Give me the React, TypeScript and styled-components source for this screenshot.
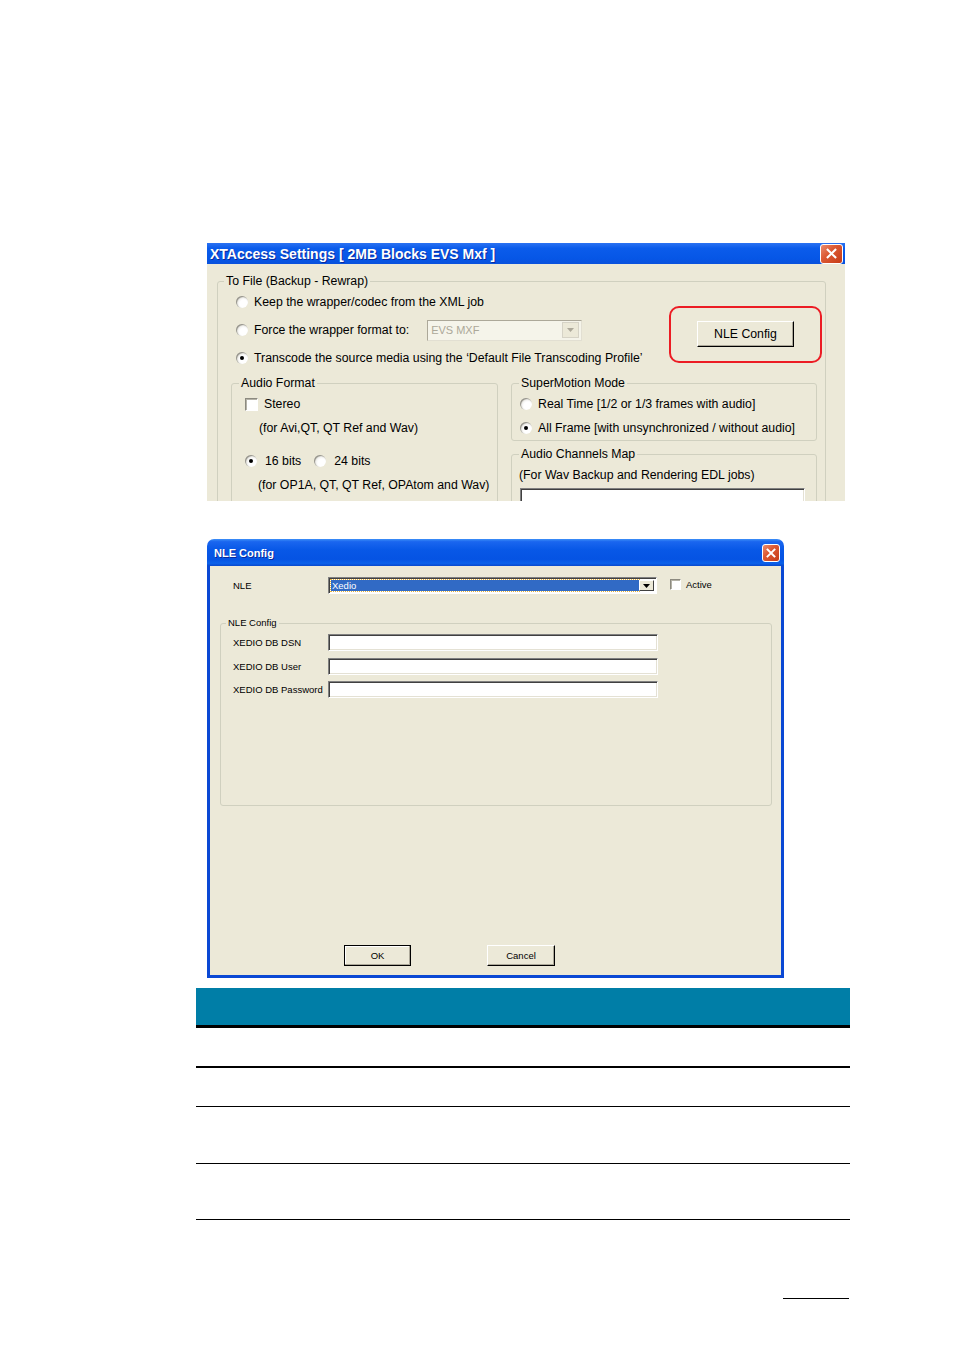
import React from 'react'
import styled, { createGlobalStyle } from 'styled-components'

const GlobalStyle = createGlobalStyle`
  body {
    margin: 0;
    background: #ffffff;
    font-family: "Liberation Sans", Arial, sans-serif;
  }
  * {
    box-sizing: border-box;
  }
`

const Page = styled.div`
  width: 955px;
  height: 1350px;
  padding-top: 243px;
  display: flex;
  flex-direction: column;
  overflow: hidden;
`

/* ---------- shared win xp bits ---------- */

const CloseButton = styled.div<{ $w: number; $h: number }>`
  width: ${p => p.$w}px;
  height: ${p => p.$h}px;
  flex: none;
  border: 1px solid #ffffff;
  border-radius: 3px;
  background: linear-gradient(135deg, #eb8d70 0%, #dc5a34 40%, #c63b16 100%);
  display: flex;
  align-items: center;
  justify-content: center;
`

const GroupBox = styled.fieldset<{ $width?: number; $height: number }>`
  margin: 0;
  padding: 0;
  min-width: 0;
  width: ${p => (p.$width ? `${p.$width}px` : 'auto')};
  height: ${p => p.$height}px;
  flex: none;
  border: 1px solid #d0d0bf;
  border-radius: 3px;
  display: flex;
  flex-direction: column;
`

const Legend = styled.legend<{ $size: number; $offset: number }>`
  margin-left: ${p => p.$offset}px;
  padding: 0 2px;
  font-size: ${p => p.$size}px;
  line-height: 14px;
  color: #000;
`

const RadioCircle = styled.span<{ $checked?: boolean }>`
  width: 12px;
  height: 12px;
  flex: none;
  border-radius: 50%;
  background: radial-gradient(circle at 65% 65%, #ffffff 35%, #d8d6cc 100%);
  box-shadow: inset 1px 1px 1px #8f8d84;
  display: flex;
  align-items: center;
  justify-content: center;
  &::after {
    content: '';
    width: 4px;
    height: 4px;
    border-radius: 50%;
    background: ${p => (p.$checked ? '#000' : 'transparent')};
  }
`

const CheckSquare = styled.span<{ $size: number }>`
  width: ${p => p.$size}px;
  height: ${p => p.$size}px;
  flex: none;
  background: #ffffff;
  border: 1px solid;
  border-color: #8c8a80 #ffffff #ffffff #8c8a80;
  box-shadow: inset 1px 1px 0 #b5b3a8;
`

const WinButton = styled.div<{ $width: number; $height: number; $size: number; $default?: boolean }>`
  width: ${p => p.$width}px;
  height: ${p => p.$height}px;
  flex: none;
  display: flex;
  align-items: center;
  justify-content: center;
  background: #ece9d8;
  font-size: ${p => p.$size}px;
  color: #000;
  border: 1px solid ${p => (p.$default ? '#000' : '#ffffff')};
  border-right-color: #000;
  border-bottom-color: #000;
  box-shadow: inset -1px -1px 0 #aca899, inset ${p => (p.$default ? '1px 1px 0 #ffffff' : '0 0 0 transparent')};
`

const InsetField = styled.div<{ $width: number; $height: number }>`
  width: ${p => p.$width}px;
  height: ${p => p.$height}px;
  flex: none;
  background: #ffffff;
  border: 1px solid;
  border-color: #808080 #ffffff #ffffff #808080;
  box-shadow: inset 1px 1px 0 #404040, inset -1px -1px 0 #e4e1d4;
`

const CloseGlyph: React.FC<{ size: number }> = ({ size }) => (
  <svg width={size} height={size} viewBox="0 0 10 10">
    <path d="M1.5 1.5 L8.5 8.5 M8.5 1.5 L1.5 8.5" stroke="#fff" strokeWidth="1.9" strokeLinecap="square" />
  </svg>
)

const ArrowGlyph: React.FC<{ color: string }> = ({ color }) => (
  <svg width="7" height="4" viewBox="0 0 7 4">
    <path d="M0 0h7L3.5 4z" fill={color} />
  </svg>
)

/* ---------- XTAccess settings window ---------- */

const SettingsWindow = styled.div`
  margin-left: 207px;
  width: 638px;
  height: 258px;
  flex: none;
  overflow: hidden;
  background: #ece9d8;
  display: flex;
  flex-direction: column;
`

const SettingsTitleBar = styled.div`
  height: 21px;
  flex: none;
  display: flex;
  align-items: center;
  justify-content: space-between;
  padding: 0 2px 0 3px;
  background: linear-gradient(180deg, #2b72f2 0%, #0b5ceb 25%, #0656e6 75%, #0a52dc 100%);
  color: #ffffff;
  font-size: 14px;
  font-weight: bold;
  text-shadow: 1px 1px 0 #0a2a9e;
  white-space: nowrap;
`

const SettingsBody = styled.div`
  flex: 1;
  padding: 10px 19px 0 10px;
  font-size: 12.3px;
  color: #000;
`

const TopArea = styled.div`
  display: flex;
  align-items: flex-start;
`

const OptionColumn = styled.div`
  flex: 1;
  padding-left: 18px;
  display: flex;
  flex-direction: column;
`

const OptionRow = styled.div<{ $height: number; $indent?: number; $gap?: number }>`
  height: ${p => p.$height}px;
  padding-left: ${p => p.$indent ?? 0}px;
  display: flex;
  align-items: center;
  gap: ${p => p.$gap ?? 6}px;
  white-space: nowrap;
`

const Spacer = styled.div<{ $height: number }>`
  height: ${p => p.$height}px;
`

const DisabledCombo = styled.div`
  width: 155px;
  height: 21px;
  margin-left: 12px;
  display: flex;
  align-items: center;
  justify-content: space-between;
  padding: 0 2px 0 3px;
  background: #f5f4ea;
  border: 1px solid;
  border-color: #aca899 #e2dfd2 #e2dfd2 #aca899;
  color: #aca899;
  font-size: 11px;
`

const DisabledArrowButton = styled.div`
  width: 17px;
  height: 16px;
  display: flex;
  align-items: center;
  justify-content: center;
  background: #ece9d8;
  border: 1px solid #d6d3c6;
`

const HighlightBox = styled.div`
  width: 153px;
  height: 57px;
  margin: 18px 3px 0 0;
  flex: none;
  border: 2px solid #ec1c24;
  border-radius: 10px;
  display: flex;
  align-items: center;
  justify-content: center;
  padding-bottom: 2px;
`

const LowerArea = styled.div`
  margin-top: 4px;
  padding-left: 13px;
  display: flex;
  gap: 13px;
`

const GroupContent = styled.div<{ $indent: number; $top?: number }>`
  padding-left: ${p => p.$indent}px;
  padding-top: ${p => p.$top ?? 0}px;
  display: flex;
  flex-direction: column;
`

const RightColumn = styled.div`
  display: flex;
  flex-direction: column;
  gap: 6px;
`

/* ---------- NLE config window ---------- */

const NleWindow = styled.div`
  margin: 38px 0 0 207px;
  width: 577px;
  height: 439px;
  flex: none;
  display: flex;
  flex-direction: column;
  border-radius: 7px 7px 0 0;
  overflow: hidden;
`

const NleTitleBar = styled.div`
  height: 27px;
  flex: none;
  display: flex;
  align-items: center;
  justify-content: space-between;
  padding: 0 4px 0 7px;
  background: linear-gradient(180deg, #3d8ff8 0%, #1a66ef 10%, #0858e7 40%, #0553e3 75%, #0b61ea 90%, #0848cc 100%);
  color: #ffffff;
  font-size: 11px;
  font-weight: bold;
  text-shadow: 1px 1px 0 #0a2a9e;
`

const NleBody = styled.div`
  flex: 1;
  display: flex;
  flex-direction: column;
  background: #ece9d8;
  border: 3px solid #0a48d4;
  border-top: none;
  font-size: 9.5px;
  color: #000;
`

const FieldRow = styled.div<{ $indent: number }>`
  display: flex;
  align-items: center;
  padding-left: ${p => p.$indent}px;
  white-space: nowrap;
`

const FieldLabel = styled.span`
  width: 95px;
  flex: none;
`

const SelectCombo = styled.div`
  width: 329px;
  height: 17px;
  flex: none;
  display: flex;
  align-items: center;
  padding: 2px;
  background: #ffffff;
  border: 1px solid;
  border-color: #808080 #ffffff #ffffff #808080;
  box-shadow: inset 1px 1px 0 #404040;
`

const SelectedValue = styled.div`
  flex: 1;
  height: 100%;
  display: flex;
  align-items: center;
  padding-left: 1px;
  background: #316ac5;
  outline: 1px dotted #e6b33c;
  color: #ffffff;
`

const ArrowButton = styled.div`
  width: 15px;
  height: 100%;
  flex: none;
  display: flex;
  align-items: center;
  justify-content: center;
  background: #ece9d8;
  border: 1px solid;
  border-color: #ffffff #404040 #404040 #ffffff;
`

const ActiveToggle = styled.div`
  margin-left: 13px;
  display: flex;
  align-items: center;
  gap: 5px;
  margin-top: -3px;
`

const NleGroupWrap = styled.div`
  margin: 22px 9px 0 10px;
`

const FieldList = styled.div`
  margin-top: 4px;
  display: flex;
  flex-direction: column;
  gap: 6.5px;
`

const ButtonRow = styled.div`
  margin-top: auto;
  padding: 0 0 9px 134px;
  display: flex;
  gap: 76px;
`

/* ---------- table + page rule ---------- */

const SpecTable = styled.div`
  margin: 10px 0 0 196px;
  width: 654px;
  flex: none;
`

const SpecHeader = styled.div`
  height: 40px;
  background: #007ea7;
  border-bottom: 3px solid #000;
`

const SpecRow = styled.div<{ $height: number; $rule: number }>`
  height: ${p => p.$height}px;
  border-bottom: ${p => p.$rule}px solid #000;
`

const FooterRule = styled.div`
  margin: 78px 0 0 783px;
  width: 66px;
  height: 1px;
  flex: none;
  background: #000;
`

const specRows = [
  { height: 40, rule: 2 },
  { height: 39, rule: 1 },
  { height: 57, rule: 1 },
  { height: 56, rule: 1 },
]

const App: React.FC = () => {
  return (
    <Page>
      <GlobalStyle />

      <SettingsWindow>
        <SettingsTitleBar>
          <span>XTAccess Settings [ 2MB Blocks EVS Mxf ]</span>
          <CloseButton $w={23} $h={20}>
            <CloseGlyph size={11} />
          </CloseButton>
        </SettingsTitleBar>
        <SettingsBody>
          <GroupBox $height={300}>
            <Legend $size={12.3} $offset={6}>To File (Backup - Rewrap)</Legend>
            <TopArea>
              <OptionColumn>
                <OptionRow $height={28}>
                  <RadioCircle />
                  <span>Keep the wrapper/codec from the XML job</span>
                </OptionRow>
                <OptionRow $height={28}>
                  <RadioCircle />
                  <span>Force the wrapper format to:</span>
                  <DisabledCombo>
                    <span>EVS MXF</span>
                    <DisabledArrowButton>
                      <ArrowGlyph color="#aca899" />
                    </DisabledArrowButton>
                  </DisabledCombo>
                </OptionRow>
                <OptionRow $height={28}>
                  <RadioCircle $checked />
                  <span>Transcode the source media using the ‘Default File Transcoding Profile’</span>
                </OptionRow>
              </OptionColumn>
              <HighlightBox>
                <WinButton $width={97} $height={26} $size={12.3}>
                  NLE Config
                </WinButton>
              </HighlightBox>
            </TopArea>

            <LowerArea>
              <GroupBox $width={267} $height={200}>
                <Legend $size={12.3} $offset={7}>Audio Format</Legend>
                <GroupContent $indent={13} $top={2}>
                  <OptionRow $height={24}>
                    <CheckSquare $size={13} />
                    <span>Stereo</span>
                  </OptionRow>
                  <OptionRow $height={23} $indent={14}>
                    (for Avi,QT, QT Ref and Wav)
                  </OptionRow>
                  <Spacer $height={10} />
                  <OptionRow $height={24} $gap={8}>
                    <RadioCircle $checked />
                    <span>16 bits</span>
                    <RadioCircle style={{ marginLeft: 5 }} />
                    <span>24 bits</span>
                  </OptionRow>
                  <OptionRow $height={23} $indent={13}>
                    (for OP1A, QT, QT Ref, OPAtom and Wav)
                  </OptionRow>
                </GroupContent>
              </GroupBox>

              <RightColumn>
                <GroupBox $width={306} $height={65}>
                  <Legend $size={12.3} $offset={7}>SuperMotion Mode</Legend>
                  <GroupContent $indent={8} $top={2}>
                    <OptionRow $height={24}>
                      <RadioCircle />
                      <span>Real Time [1/2 or 1/3 frames with audio]</span>
                    </OptionRow>
                    <OptionRow $height={24}>
                      <RadioCircle $checked />
                      <span>All Frame [with unsynchronized / without audio]</span>
                    </OptionRow>
                  </GroupContent>
                </GroupBox>
                <GroupBox $width={306} $height={100}>
                  <Legend $size={12.3} $offset={7}>Audio Channels Map</Legend>
                  <GroupContent $indent={7} $top={1}>
                    <OptionRow $height={26}>(For Wav Backup and Rendering EDL jobs)</OptionRow>
                    <InsetField $width={285} $height={30} style={{ marginLeft: 1 }} />
                  </GroupContent>
                </GroupBox>
              </RightColumn>
            </LowerArea>
          </GroupBox>
        </SettingsBody>
      </SettingsWindow>

      <NleWindow>
        <NleTitleBar>
          <span>NLE Config</span>
          <CloseButton $w={18} $h={18}>
            <CloseGlyph size={10} />
          </CloseButton>
        </NleTitleBar>
        <NleBody>
          <FieldRow $indent={23} style={{ marginTop: 11 }}>
            <FieldLabel>NLE</FieldLabel>
            <SelectCombo>
              <SelectedValue>Xedio</SelectedValue>
              <ArrowButton>
                <ArrowGlyph color="#000" />
              </ArrowButton>
            </SelectCombo>
            <ActiveToggle>
              <CheckSquare $size={11} />
              <span>Active</span>
            </ActiveToggle>
          </FieldRow>

          <NleGroupWrap>
            <GroupBox $height={190}>
              <Legend $size={9.5} $offset={5}>NLE Config</Legend>
              <FieldList>
                {['XEDIO DB DSN', 'XEDIO DB User', 'XEDIO DB Password'].map(label => (
                  <FieldRow key={label} $indent={12}>
                    <FieldLabel>{label}</FieldLabel>
                    <InsetField $width={330} $height={17} />
                  </FieldRow>
                ))}
              </FieldList>
            </GroupBox>
          </NleGroupWrap>

          <ButtonRow>
            <WinButton $width={67} $height={21} $size={9.5} $default>
              OK
            </WinButton>
            <WinButton $width={68} $height={21} $size={9.5}>
              Cancel
            </WinButton>
          </ButtonRow>
        </NleBody>
      </NleWindow>

      <SpecTable>
        <SpecHeader />
        {specRows.map((row, i) => (
          <SpecRow key={i} $height={row.height} $rule={row.rule} />
        ))}
      </SpecTable>

      <FooterRule />
    </Page>
  )
}

export default App
